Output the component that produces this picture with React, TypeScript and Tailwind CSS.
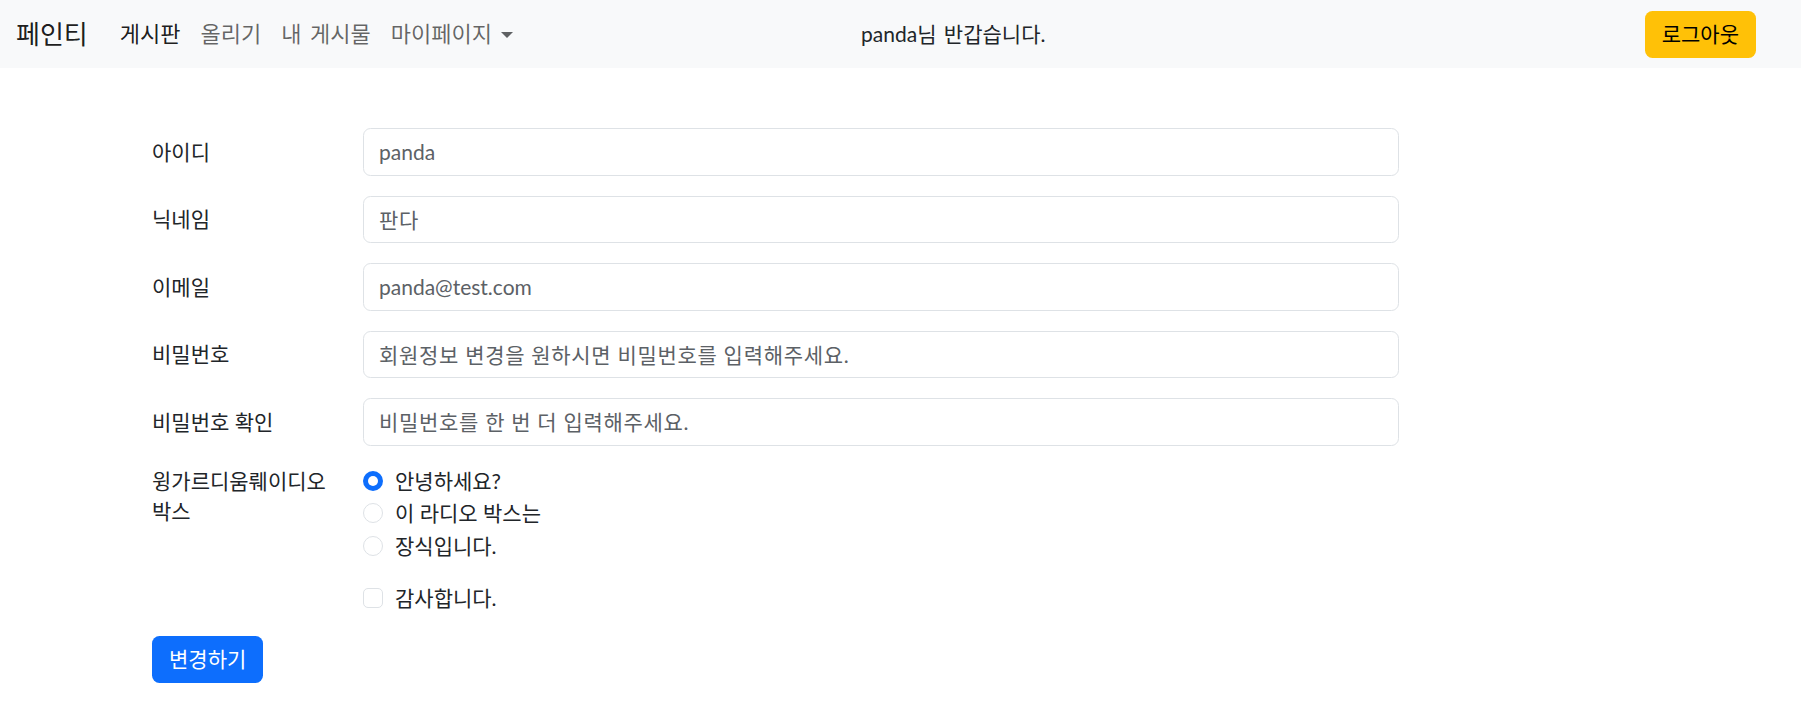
const font = { fontFamily: 'Lato, "Noto Sans CJK KR", sans-serif' };

const fields = [
  { label: "아이디", placeholder: "panda", ko: false },
  { label: "닉네임", placeholder: "판다", ko: true },
  { label: "이메일", placeholder: "panda@test.com", ko: false },
  { label: "비밀번호", placeholder: "회원정보 변경을 원하시면 비밀번호를 입력해주세요.", ko: true },
  { label: "비밀번호 확인", placeholder: "비밀번호를 한 번 더 입력해주세요.", ko: true },
];

const radios = ["안녕하세요?", "이 라디오 박스는", "장식입니다."];

const Navbar = () => (
  <nav className="flex h-[68px] items-center bg-[#f8f9fa] pl-4 pr-[45px]">
    <a className="mr-[22px] text-[26px] leading-[36px] text-black/90">페인티</a>
    <ul className="flex items-center text-[22px] leading-[30px] [word-spacing:3px]">
      <li className="px-2.5 text-black/90">게시판</li>
      <li className="px-2.5 text-black/60">올리기</li>
      <li className="px-2.5 text-black/60">내 게시물</li>
      <li className="flex items-center px-2.5 text-black/60">
        마이페이지
        <span className="ml-[9px] mt-[2px] h-0 w-0 border-x-[6px] border-t-[6px] border-x-transparent border-t-[#5f6163]" />
      </li>
    </ul>
    <span className="ml-[338px] text-[21px] leading-[30px] text-[#212529] [word-spacing:2px]">
      panda님 반갑습니다.
    </span>
    <div className="flex-1" />
    <button className="h-[47px] rounded-[7.5px] bg-[#ffc107] px-[17px] text-[21px] text-black">
      로그아웃
    </button>
  </nav>
);

export default function App() {
  return (
    <div className="min-h-screen bg-white text-[#212529]" style={font}>
      <Navbar />

      <form className="mt-[60px] pl-[152px]">
        {fields.map((field) => (
          <div key={field.label} className="mb-5 flex items-center">
            <label className="w-[211px] shrink-0 text-[21px] leading-[30px]">{field.label}</label>
            <input
              readOnly
              placeholder={field.placeholder}
              className={
                field.ko
                  ? "h-[47.5px] w-[1036px] shrink-0 rounded-[7.5px] border border-[#dee2e6] bg-white px-[15px] text-[21px] tracking-[0.7px] outline-none placeholder:text-[#5c6166]"
                  : "h-[47.5px] w-[1036px] shrink-0 rounded-[7.5px] border border-[#dee2e6] bg-white px-[15px] text-[21px] outline-none placeholder:text-[#5c6166]"
              }
            />
          </div>
        ))}

        {/* 라디오 */}
        <div className="mb-5 flex">
          <label className="mr-[30px] w-[181px] shrink-0 text-[21px] leading-[30px]">윙가르디움뤠이디오 박스</label>
          <div className="flex flex-col text-[21px] leading-[30px]">
            {radios.map((text, i) => (
              <div key={text} className="mb-[2.5px] flex items-center gap-3">
                {i === 0 ? (
                  <span className="flex h-5 w-5 items-center justify-center rounded-full bg-[#0d6efd]">
                    <span className="h-[10px] w-[10px] rounded-full bg-white" />
                  </span>
                ) : (
                  <span className="h-5 w-5 rounded-full border border-[#dee2e6] bg-white" />
                )}
                {text}
              </div>
            ))}
          </div>
        </div>

        {/* 체크박스 */}
        <div className="mb-5 flex pl-[211px] text-[21px] leading-[30px]">
          <div className="flex items-center gap-3">
            <span className="h-5 w-5 rounded-[5px] border border-[#dee2e6] bg-white" />
            감사합니다.
          </div>
        </div>

        <button
          type="button"
          className="mt-[2.5px] h-[47px] rounded-[7.5px] bg-[#0d6efd] px-[17px] text-[21px] text-white"
        >
          변경하기
        </button>
      </form>
    </div>
  );
}
